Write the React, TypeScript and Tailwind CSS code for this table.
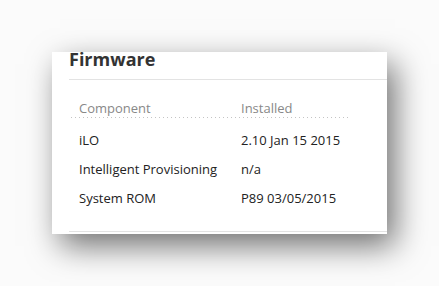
const rows = [
  { name: "iLO", version: "2.10 Jan 15 2015" },
  { name: "Intelligent Provisioning", version: "n/a" },
  { name: "System ROM", version: "P89 03/05/2015" },
];

export default function App() {
  return (
    <div className="w-[439px] h-[286px] bg-[#fbfbfb] pt-[52px] pl-[52px] font-['Open_Sans',sans-serif]">
      <div className="w-[335px] h-[182px] bg-white overflow-hidden shadow-[8px_12px_30px_rgba(0,0,0,0.55)] flex flex-col">
        {/* Section heading */}
        <div className="ml-[17px] h-[28px] border-b border-[#e3e3e3] flex items-start">
          <h2 className="text-[18px] leading-[14px] font-bold text-[#333]">Firmware</h2>
        </div>

        {/* Firmware table */}
        <div className="ml-[19px] mt-[17px] w-[278px] text-[13px]">
          <div className="flex h-[20px] pt-[3px] items-center text-[#888]">
            <div className="w-[162px] pl-[8px]">Component</div>
            <div className="pl-[8px]">Installed</div>
          </div>
          <div className="h-px bg-[linear-gradient(to_right,#c4c4c4_1px,transparent_1px)] bg-[length:4px_1px]" />
          <div className="pt-[8px] text-[#222]">
            {rows.map((r) => (
              <div key={r.name} className="flex h-[29px] items-center">
                <div className="w-[162px] pl-[8px]">{r.name}</div>
                <div className="pl-[8px]">{r.version}</div>
              </div>
            ))}
          </div>
        </div>

        <div className="mt-auto ml-[17px] mb-[2px] border-b border-[#e3e3e3]" />
      </div>
    </div>
  );
}
